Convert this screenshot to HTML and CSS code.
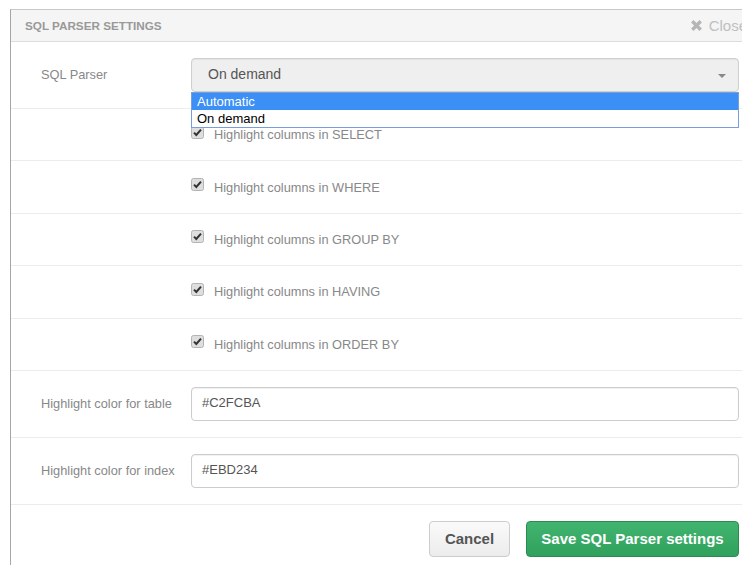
FILE: index.html
```html
<!DOCTYPE html>
<html>
<head>
<meta charset="utf-8">
<link rel="stylesheet" href="styles.css">
</head>
<body>
<div class="modal">
  <div class="modal-header">
    <span class="modal-title">SQL PARSER SETTINGS</span>
    <span class="close">
      <svg class="close-icon" width="13" height="13" viewBox="0 0 12 12"><path d="M1 3.2 L3.2 1 L6 3.8 L8.8 1 L11 3.2 L8.2 6 L11 8.8 L8.8 11 L6 8.2 L3.2 11 L1 8.8 L3.8 6 Z" fill="#b5b5b5"/></svg>
      Close
    </span>
  </div>

  <div class="form-row">
    <label class="row-label">SQL Parser</label>
    <div class="control select-wrap">
      <div class="select">
        <span>On demand</span>
        <span class="caret"></span>
      </div>
      <ul class="dropdown">
        <li class="active">Automatic</li>
        <li>On demand</li>
      </ul>
    </div>
  </div>

  <div class="form-row check-row">
    <div class="row-label"></div>
    <label class="control check"><span class="box"><svg width="13" height="13" viewBox="0 0 13 13"><rect x="0.5" y="0.5" width="12" height="12" rx="2" fill="#dedede" stroke="#b3b3b3"/><path d="M3 6.6 L5.3 9 L10 3.6" fill="none" stroke="#333" stroke-width="2"/></svg></span>Highlight columns in SELECT</label>
  </div>
  <div class="form-row check-row">
    <div class="row-label"></div>
    <label class="control check"><span class="box"><svg width="13" height="13" viewBox="0 0 13 13"><rect x="0.5" y="0.5" width="12" height="12" rx="2" fill="#dedede" stroke="#b3b3b3"/><path d="M3 6.6 L5.3 9 L10 3.6" fill="none" stroke="#333" stroke-width="2"/></svg></span>Highlight columns in WHERE</label>
  </div>
  <div class="form-row check-row">
    <div class="row-label"></div>
    <label class="control check"><span class="box"><svg width="13" height="13" viewBox="0 0 13 13"><rect x="0.5" y="0.5" width="12" height="12" rx="2" fill="#dedede" stroke="#b3b3b3"/><path d="M3 6.6 L5.3 9 L10 3.6" fill="none" stroke="#333" stroke-width="2"/></svg></span>Highlight columns in GROUP BY</label>
  </div>
  <div class="form-row check-row">
    <div class="row-label"></div>
    <label class="control check"><span class="box"><svg width="13" height="13" viewBox="0 0 13 13"><rect x="0.5" y="0.5" width="12" height="12" rx="2" fill="#dedede" stroke="#b3b3b3"/><path d="M3 6.6 L5.3 9 L10 3.6" fill="none" stroke="#333" stroke-width="2"/></svg></span>Highlight columns in HAVING</label>
  </div>
  <div class="form-row check-row">
    <div class="row-label"></div>
    <label class="control check"><span class="box"><svg width="13" height="13" viewBox="0 0 13 13"><rect x="0.5" y="0.5" width="12" height="12" rx="2" fill="#dedede" stroke="#b3b3b3"/><path d="M3 6.6 L5.3 9 L10 3.6" fill="none" stroke="#333" stroke-width="2"/></svg></span>Highlight columns in ORDER BY</label>
  </div>

  <div class="form-row">
    <label class="row-label">Highlight color for table</label>
    <div class="control"><div class="input">#C2FCBA</div></div>
  </div>
  <div class="form-row">
    <label class="row-label">Highlight color for index</label>
    <div class="control"><div class="input">#EBD234</div></div>
  </div>

  <div class="modal-footer">
    <button class="btn btn-default">Cancel</button>
    <button class="btn btn-success">Save SQL Parser settings</button>
  </div>
</div>
</body>
</html>
```

FILE: styles.css
```css
html, body {
  margin: 0;
  padding: 0;
  background: #fff;
  overflow: hidden;
  width: 742px;
  height: 565px;
}

body {
  font-family: "Liberation Sans", Arial, sans-serif;
  padding: 9px 0 0 10px;
  box-sizing: border-box;
}

.modal {
  width: 758px;
  border-left: 1px solid #a6a6a6;
  border-top: 1px solid #c8c8c8;
  background: #fff;
  height: 560px;
  overflow: hidden;
}

.modal-header {
  height: 31px;
  background: #f5f5f5;
  border-bottom: 1px solid #dcdcdc;
  display: flex;
  align-items: center;
  justify-content: space-between;
  padding: 0 22px 0 14px;
}

.modal-title {
  font-size: 11.7px;
  font-weight: bold;
  color: #999;
}

.close {
  display: flex;
  align-items: center;
  gap: 6px;
  font-size: 15px;
  color: #c0c0c0;
}

.form-row {
  display: flex;
  align-items: center;
  padding: 16px 30px;
  border-bottom: 1px solid #ececec;
}

.row-label {
  width: 150px;
  flex: none;
  font-size: 12.8px;
  color: #888;
  margin-top: -1px;
}

.control {
  width: 548px;
  flex: none;
}

.select-wrap {
  position: relative;
}

.select {
  height: 34px;
  box-sizing: border-box;
  border: 1px solid #cfcfcf;
  border-radius: 4px;
  background: #efefef;
  box-shadow: inset 0 1px 1px rgba(0,0,0,0.05);
  display: flex;
  align-items: center;
  justify-content: space-between;
  padding: 0 12px 2px 16px;
  font-size: 14px;
  color: #555;
}

.caret {
  width: 0;
  height: 0;
  border-left: 4px solid transparent;
  border-right: 4px solid transparent;
  border-top: 4px solid #888;
  margin-top: 4px;
}

/* open native list of the select */
.dropdown {
  position: absolute;
  top: 34px;
  left: 0;
  right: 0;
  margin: 0;
  padding: 0;
  list-style: none;
  border: 1px solid #7b9ed6;
  background: #fff;
  font-size: 13px;
  color: #000;
  z-index: 2;
}

.dropdown li {
  height: 17px;
  line-height: 17px;
  padding-left: 5px;
}

.dropdown li.active {
  background: #3b8ff5;
  color: #fff;
}

.check-row {
  height: 19.4px;
}

.check {
  display: flex;
  align-items: center;
  font-size: 12.8px;
  color: #888;
}

.box {
  display: flex;
  width: 13px;
  height: 13px;
  margin-right: 10px;
  margin-top: -5px;
}

.input {
  height: 34px;
  box-sizing: border-box;
  border: 1px solid #ccc;
  border-radius: 4px;
  display: flex;
  align-items: center;
  padding: 0 0 2px 10px;
  font-size: 13px;
  color: #555;
  box-shadow: inset 0 1px 1px rgba(0,0,0,0.06);
}

.modal-footer {
  display: flex;
  justify-content: flex-end;
  gap: 16px;
  padding: 16px 0 0 0;
  width: 728px;
}

.btn {
  height: 36px;
  border-radius: 4px;
  font-family: "Liberation Sans", Arial, sans-serif;
  font-size: 15px;
  font-weight: bold;
  padding: 0;
}

.btn-default {
  width: 81px;
  background: linear-gradient(#fafafa, #ececec);
  border: 1px solid #cdcdcd;
  color: #555;
}

.btn-success {
  width: 213px;
  background: linear-gradient(#41b56f, #31a15d);
  border: 1px solid #2b8b50;
  color: #fff;
}
```
